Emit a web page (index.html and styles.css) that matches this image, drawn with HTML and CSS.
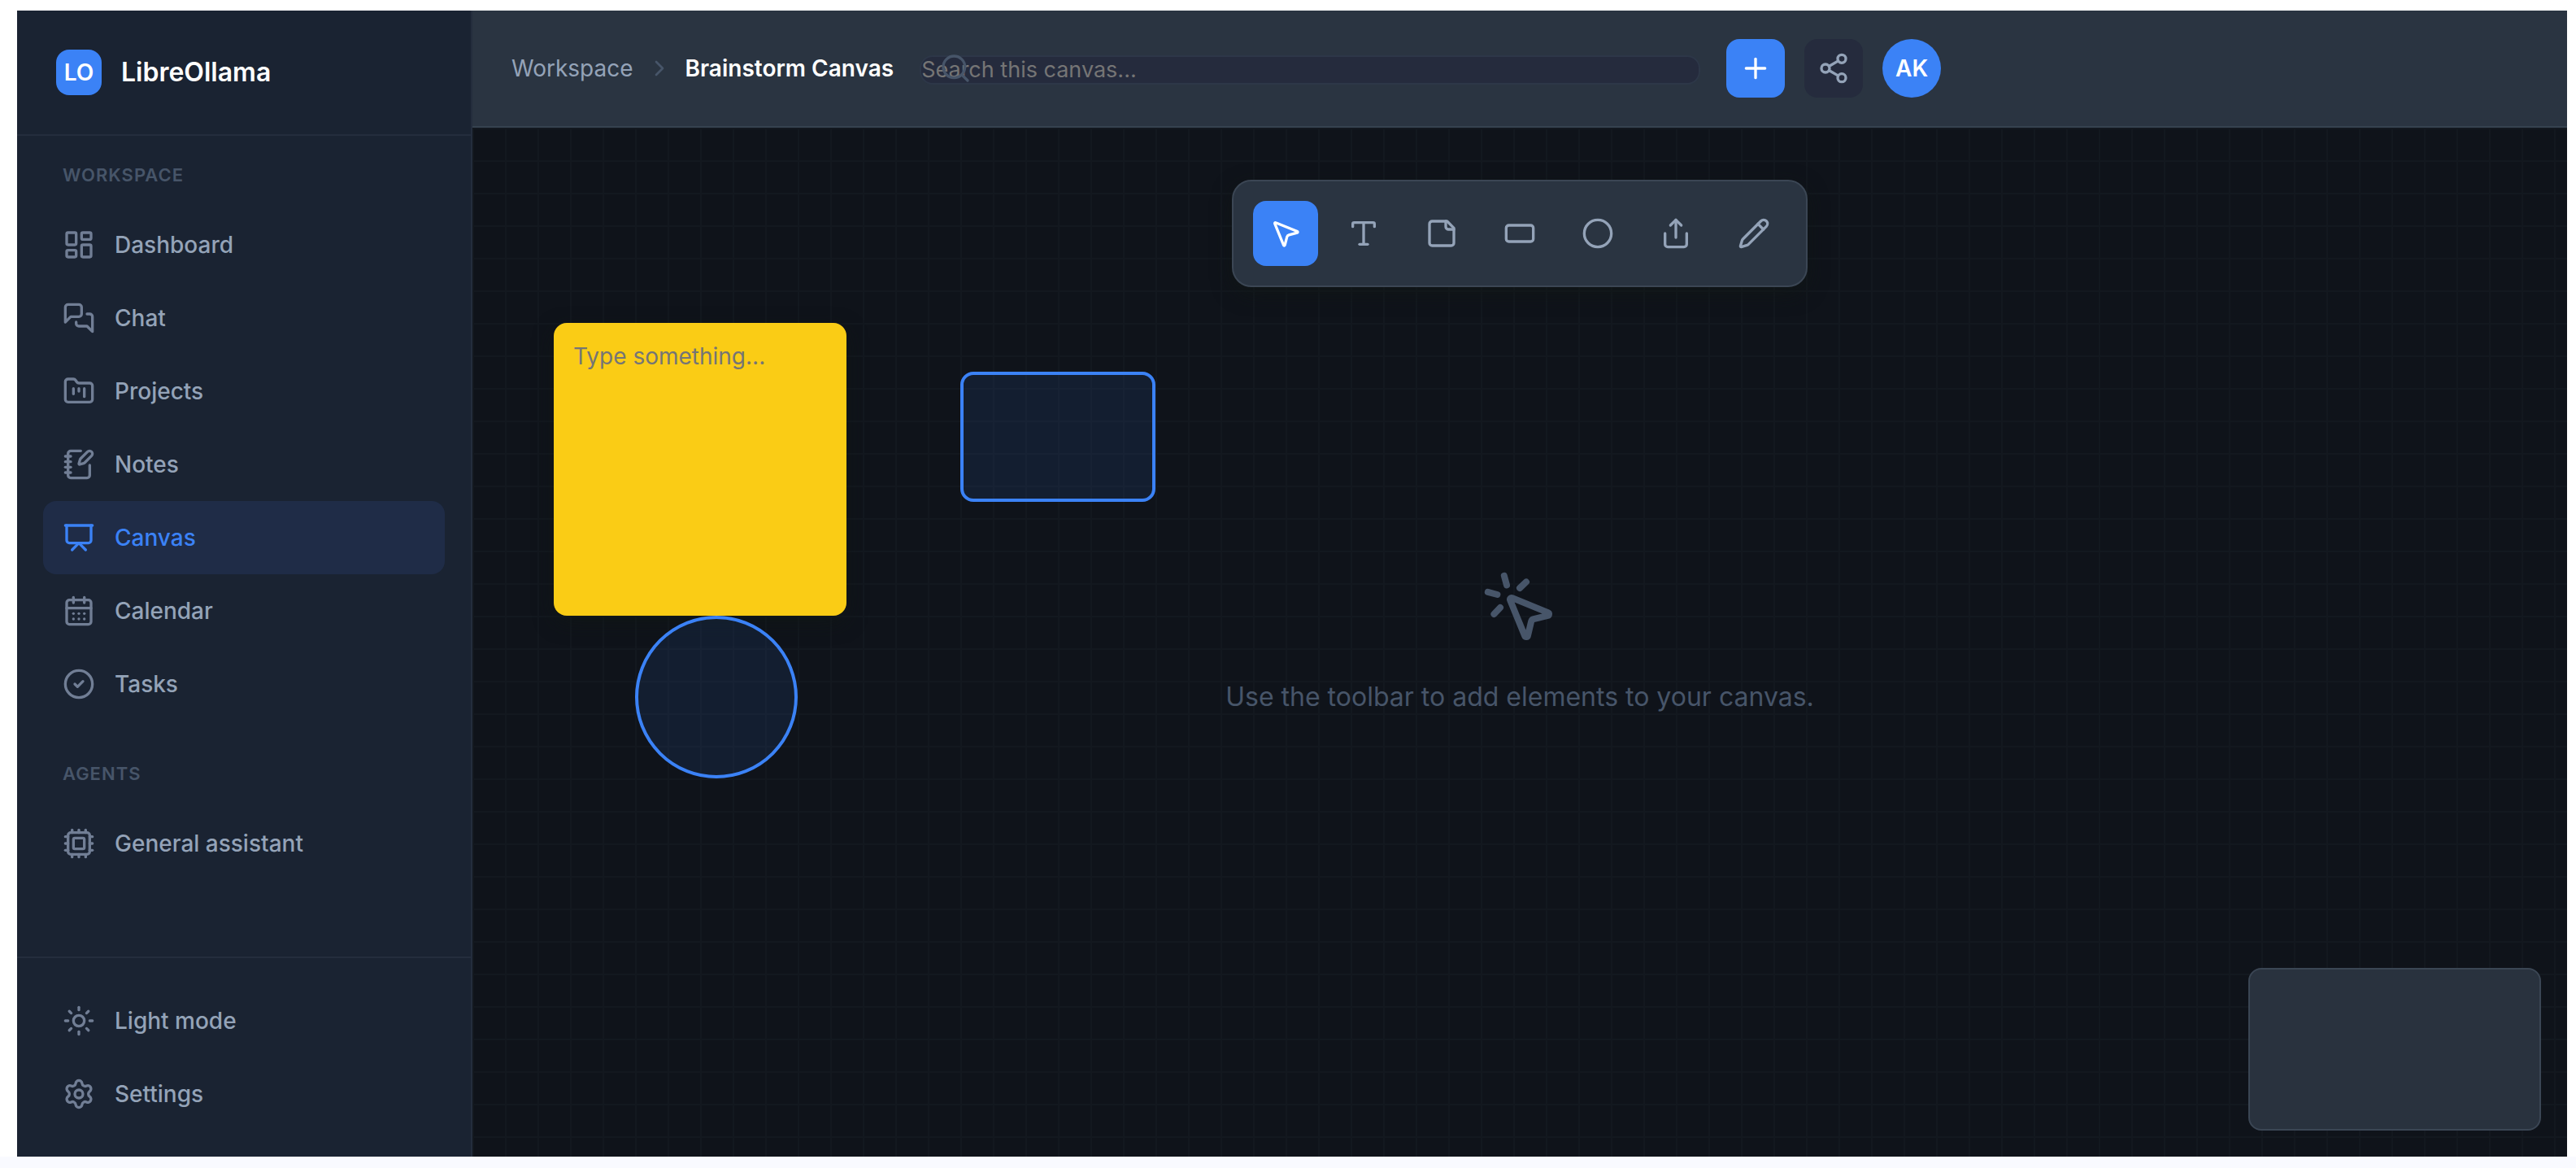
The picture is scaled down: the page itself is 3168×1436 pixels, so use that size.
FILE: index.html
```html
<!DOCTYPE html>
<html lang="en">
<head>
<meta charset="utf-8">
<title>Brainstorm Canvas - LibreOllama</title>
<link rel="stylesheet" href="styles.css">
</head>
<body>
<div class="app">
  <aside class="sidebar">
    <div class="brand">
      <span class="brand-logo">LO</span>
      <span class="brand-name">LibreOllama</span>
    </div>
    <nav class="nav">
      <section class="nav-section">
        <h2 class="nav-label">Workspace</h2>
        <a class="nav-item" href="#dashboard">
          <svg class="icon" viewBox="0 0 24 24"><rect x="3" y="3" width="7" height="9" rx="1"/><rect x="14" y="3" width="7" height="5" rx="1"/><rect x="14" y="12" width="7" height="9" rx="1"/><rect x="3" y="16" width="7" height="5" rx="1"/></svg>
          <span>Dashboard</span>
        </a>
        <a class="nav-item" href="#chat">
          <svg class="icon" viewBox="0 0 24 24"><path d="M14 9a2 2 0 0 1-2 2H6l-4 4V4a2 2 0 0 1 2-2h8a2 2 0 0 1 2 2z"/><path d="M18 9h2a2 2 0 0 1 2 2v11l-4-4h-6a2 2 0 0 1-2-2v-1"/></svg>
          <span>Chat</span>
        </a>
        <a class="nav-item" href="#projects">
          <svg class="icon" viewBox="0 0 24 24"><path d="M4 20h16a2 2 0 0 0 2-2V8a2 2 0 0 0-2-2h-7.93a2 2 0 0 1-1.66-.9l-.82-1.2A2 2 0 0 0 7.93 3H4a2 2 0 0 0-2 2v13c0 1.1.9 2 2 2Z"/><path d="M8 10v4"/><path d="M12 10v2"/><path d="M16 10v6"/></svg>
          <span>Projects</span>
        </a>
        <a class="nav-item" href="#notes">
          <svg class="icon" viewBox="0 0 24 24"><path d="M13.4 2H6a2 2 0 0 0-2 2v16a2 2 0 0 0 2 2h12a2 2 0 0 0 2-2v-7.4"/><path d="M2 6h4"/><path d="M2 10h4"/><path d="M2 14h4"/><path d="M2 18h4"/><path d="M21.378 5.626a1 1 0 1 0-3.004-3.004l-5.01 5.012a2 2 0 0 0-.506.854l-.837 2.87a.5.5 0 0 0 .62.62l2.87-.837a2 2 0 0 0 .854-.506z"/></svg>
          <span>Notes</span>
        </a>
        <a class="nav-item active" href="#canvas" aria-current="page">
          <svg class="icon" viewBox="0 0 24 24"><path d="M2 3h20"/><path d="M21 3v11a2 2 0 0 1-2 2H5a2 2 0 0 1-2-2V3"/><path d="m7 21 5-5 5 5"/></svg>
          <span>Canvas</span>
        </a>
        <a class="nav-item" href="#calendar">
          <svg class="icon" viewBox="0 0 24 24"><path d="M8 2v4"/><path d="M16 2v4"/><rect x="3" y="4" width="18" height="18" rx="2"/><path d="M3 10h18"/><path d="M8 14h.01"/><path d="M12 14h.01"/><path d="M16 14h.01"/><path d="M8 18h.01"/><path d="M12 18h.01"/><path d="M16 18h.01"/></svg>
          <span>Calendar</span>
        </a>
        <a class="nav-item" href="#tasks">
          <svg class="icon" viewBox="0 0 24 24"><circle cx="12" cy="12" r="10"/><path d="m9 12 2 2 4-4"/></svg>
          <span>Tasks</span>
        </a>
      </section>
      <section class="nav-section">
        <h2 class="nav-label">Agents</h2>
        <a class="nav-item" href="#general-assistant">
          <svg class="icon" viewBox="0 0 24 24"><path d="M12 20v2"/><path d="M12 2v2"/><path d="M17 20v2"/><path d="M17 2v2"/><path d="M2 12h2"/><path d="M2 17h2"/><path d="M2 7h2"/><path d="M20 12h2"/><path d="M20 17h2"/><path d="M20 7h2"/><path d="M7 20v2"/><path d="M7 2v2"/><rect x="4" y="4" width="16" height="16" rx="2"/><rect x="8" y="8" width="8" height="8" rx="1"/></svg>
          <span>General assistant</span>
        </a>
      </section>
    </nav>
    <div class="sidebar-footer">
      <button class="nav-item" type="button">
        <svg class="icon" viewBox="0 0 24 24"><circle cx="12" cy="12" r="4"/><path d="M12 2v2"/><path d="M12 20v2"/><path d="m4.93 4.93 1.41 1.41"/><path d="m17.66 17.66 1.41 1.41"/><path d="M2 12h2"/><path d="M20 12h2"/><path d="m6.34 17.66-1.41 1.41"/><path d="m19.07 4.93-1.41 1.41"/></svg>
        <span>Light mode</span>
      </button>
      <a class="nav-item" href="#settings">
        <svg class="icon" viewBox="0 0 24 24"><path d="M9.671 4.136a2.34 2.34 0 0 1 4.659 0 2.34 2.34 0 0 0 3.319 1.915 2.34 2.34 0 0 1 2.33 4.033 2.34 2.34 0 0 0 0 3.831 2.34 2.34 0 0 1-2.33 4.033 2.34 2.34 0 0 0-3.319 1.915 2.34 2.34 0 0 1-4.659 0 2.34 2.34 0 0 0-3.32-1.915 2.34 2.34 0 0 1-2.33-4.033 2.34 2.34 0 0 0 0-3.831A2.34 2.34 0 0 1 6.35 6.051a2.34 2.34 0 0 0 3.319-1.915"/><circle cx="12" cy="12" r="3"/></svg>
        <span>Settings</span>
      </a>
    </div>
  </aside>

  <main class="main">
    <header class="topbar">
      <nav class="breadcrumb" aria-label="Breadcrumb">
        <a class="crumb" href="#workspace">Workspace</a>
        <svg class="icon crumb-separator" viewBox="0 0 24 24"><path d="m9 18 6-6-6-6"/></svg>
        <span class="crumb-current">Brainstorm Canvas</span>
      </nav>
      <div class="search">
        <input class="search-input" type="search" placeholder="Search this canvas..." aria-label="Search this canvas">
        <svg class="icon search-icon" viewBox="0 0 24 24"><circle cx="11" cy="11" r="8"/><path d="m21 21-4.3-4.3"/></svg>
      </div>
      <div class="actions">
        <button class="action primary" type="button" aria-label="New">
          <svg class="icon" viewBox="0 0 24 24"><path d="M5 12h14"/><path d="M12 5v14"/></svg>
        </button>
        <button class="action" type="button" aria-label="Share">
          <svg class="icon" viewBox="0 0 24 24"><circle cx="18" cy="5" r="3"/><circle cx="6" cy="12" r="3"/><circle cx="18" cy="19" r="3"/><path d="m8.59 13.51 6.83 3.98"/><path d="m15.41 6.51-6.82 3.98"/></svg>
        </button>
        <button class="avatar" type="button">AK</button>
      </div>
    </header>

    <div class="canvas">
      <div class="empty">
        <svg class="icon empty-icon" viewBox="0 0 24 24"><path d="M14 4.1 12 6"/><path d="m5.1 8-2.9-.8"/><path d="m6 12-1.9 2"/><path d="M7.2 2.2 8 5.1"/><path d="M9.037 9.69a.498.498 0 0 1 .653-.653l11 4.5a.5.5 0 0 1-.074.949l-4.349 1.041a1 1 0 0 0-.74.739l-1.04 4.35a.5.5 0 0 1-.95.074z"/></svg>
        <p class="empty-text">Use the toolbar to add elements to your canvas.</p>
      </div>

      <textarea class="sticky" placeholder="Type something..." aria-label="Sticky note"></textarea>
      <div class="shape shape-rect"></div>
      <div class="shape shape-circle"></div>

      <div class="toolbar" role="toolbar" aria-label="Canvas tools">
        <button class="tool active" type="button" aria-label="Select">
          <svg class="icon" viewBox="0 0 24 24"><path d="M4.037 4.688a.495.495 0 0 1 .651-.651l16 6.5a.5.5 0 0 1-.063.947l-6.124 1.58a2 2 0 0 0-1.438 1.435l-1.579 6.126a.5.5 0 0 1-.947.063z"/></svg>
        </button>
        <button class="tool" type="button" aria-label="Text">
          <svg class="icon" viewBox="0 0 24 24"><path d="M12 4v16"/><path d="M4 7V5a1 1 0 0 1 1-1h14a1 1 0 0 1 1 1v2"/><path d="M9 20h6"/></svg>
        </button>
        <button class="tool" type="button" aria-label="Sticky note">
          <svg class="icon" viewBox="0 0 24 24"><path d="M16 3H5a2 2 0 0 0-2 2v14a2 2 0 0 0 2 2h14a2 2 0 0 0 2-2V8Z"/><path d="M15 3v4a2 2 0 0 0 2 2h4"/></svg>
        </button>
        <button class="tool" type="button" aria-label="Rectangle">
          <svg class="icon" viewBox="0 0 24 24"><rect x="2" y="6" width="20" height="12" rx="2"/></svg>
        </button>
        <button class="tool" type="button" aria-label="Circle">
          <svg class="icon" viewBox="0 0 24 24"><circle cx="12" cy="12" r="10"/></svg>
        </button>
        <button class="tool" type="button" aria-label="Export">
          <svg class="icon" viewBox="0 0 24 24"><path d="M12 2v13"/><path d="m16 6-4-4-4 4"/><path d="M4 12v8a2 2 0 0 0 2 2h12a2 2 0 0 0 2-2v-8"/></svg>
        </button>
        <button class="tool" type="button" aria-label="Draw">
          <svg class="icon" viewBox="0 0 24 24"><path d="M21.174 6.812a1 1 0 0 0-3.986-3.987L3.842 16.174a2 2 0 0 0-.5.83l-1.321 4.352a.5.5 0 0 0 .623.622l4.353-1.32a2 2 0 0 0 .83-.497z"/><path d="m15 5 4 4"/></svg>
        </button>
      </div>

      <div class="minimap"></div>
    </div>
  </main>
</div>
</body>
</html>
```
FILE: styles.css
```css
:root {
  --accent: #3b82f6;
  --sidebar: #1a2332;
  --surface: #2a3441;
  --field: #252b3d;
  --canvas: #0f131a;
  --line: #242d3d;
  --line-strong: #36424f;
  --text: #94a3b8;
  --text-muted: #475569;
}

* {
  box-sizing: border-box;
}

html {
  background: #f9faff;
}

body {
  margin: 0;
  padding: 13px 11px 0 21px;
  background: #fff;
  font-family: Inter, "Liberation Sans", sans-serif;
  font-size: 28px;
  line-height: 42px;
  color: var(--text);
}

button,
input,
textarea {
  margin: 0;
  border: 0;
  font-family: inherit;
}

a {
  color: inherit;
  text-decoration: none;
}

.icon {
  flex: none;
  width: 40px;
  height: 40px;
  fill: none;
  stroke: currentColor;
  stroke-width: 2;
  stroke-linecap: round;
  stroke-linejoin: round;
}

.app {
  display: flex;
  min-height: calc(100vh - 27px);
  background: var(--canvas);
}

/* Sidebar */

.sidebar {
  display: flex;
  flex-direction: column;
  flex: none;
  width: 560px;
  background: var(--sidebar);
  border-right: 2px solid var(--line);
}

.brand {
  display: flex;
  align-items: center;
  gap: 24px;
  padding: 48px;
  border-bottom: 2px solid var(--line);
}

.brand-logo {
  display: flex;
  align-items: center;
  justify-content: center;
  width: 56px;
  height: 56px;
  border-radius: 16px;
  background: var(--accent);
  color: #fff;
  font-weight: 600;
}

.brand-name {
  color: #fff;
  font-size: 32px;
  font-weight: 600;
}

.nav {
  flex: 1;
  padding: 31px 32px;
}

.nav-section + .nav-section {
  margin-top: 48px;
}

.nav-label {
  margin: 0 0 24px;
  padding: 0 24px;
  color: var(--text-muted);
  font-size: 22px;
  font-weight: 600;
  line-height: 34px;
  letter-spacing: 1px;
  text-transform: uppercase;
}

.nav-item {
  display: flex;
  align-items: center;
  gap: 24px;
  width: 100%;
  padding: 24px;
  border-radius: 16px;
  background: none;
  color: var(--text);
  font-size: 28px;
  font-weight: 500;
  line-height: 42px;
  text-align: left;
}

.nav-item .icon {
  color: #717e95;
}

.nav-item.active {
  background: #1f2c47;
  color: var(--accent);
}

.nav-item.active .icon {
  color: var(--accent);
}

.sidebar-footer {
  padding: 32px;
  border-top: 2px solid var(--line);
}

/* Top bar */

.main {
  display: flex;
  flex-direction: column;
  flex: 1;
  min-width: 0;
}

.topbar {
  display: flex;
  align-items: center;
  gap: 32px;
  padding: 35px 48px;
  background: var(--surface);
  border-bottom: 2px solid var(--line-strong);
}

.breadcrumb {
  display: flex;
  align-items: center;
  gap: 16px;
  white-space: nowrap;
}

.crumb-separator {
  width: 32px;
  height: 32px;
  color: var(--text-muted);
}

.crumb-current {
  color: #fff;
  font-weight: 600;
}

.search {
  position: relative;
  display: flex;
  align-items: center;
  flex: 0 1 960px;
  padding-top: 4px;
}

.search-input {
  width: 100%;
  height: 36px;
  padding: 0 0 2px;
  border: 2px solid #2d3748;
  border-radius: 16px;
  background: var(--field);
  color: #fff;
  font-size: 27px;
}

.search-input::placeholder,
.sticky::placeholder {
  color: #757575;
}

.search-icon {
  position: absolute;
  left: 24px;
  top: 0;
  color: var(--text-muted);
}

.actions {
  display: flex;
  gap: 24px;
}

.action,
.avatar {
  display: flex;
  align-items: center;
  justify-content: center;
  width: 72px;
  height: 72px;
  padding: 0;
  border-radius: 16px;
  background: var(--field);
  color: var(--text);
}

.action.primary {
  background: var(--accent);
  color: #fff;
}

.avatar {
  border-radius: 50%;
  background: var(--accent);
  color: #fff;
  font-size: 28px;
  font-weight: 600;
}

/* Canvas */

.canvas {
  position: relative;
  display: flex;
  align-items: center;
  justify-content: center;
  flex: 1;
  background-color: var(--canvas);
  background-image:
    linear-gradient(#13181f 2px, transparent 2px),
    linear-gradient(90deg, #13181f 2px, transparent 2px);
  background-size: 40px 40px;
}

.empty {
  display: flex;
  flex-direction: column;
  align-items: center;
  gap: 38px;
  color: var(--text-muted);
}

.empty-icon {
  width: 96px;
  height: 96px;
}

.empty-text {
  margin: 0;
  font-size: 32px;
  line-height: 48px;
}

.sticky {
  position: absolute;
  left: 100px;
  top: 240px;
  width: 360px;
  height: 360px;
  padding: 24px;
  border-radius: 16px;
  background: #facc15;
  box-shadow: 0 8px 24px rgba(17, 24, 20, .6);
  color: #111827;
  font-size: 28px;
  line-height: 34px;
  resize: none;
}

.shape {
  position: absolute;
  border: 4px solid var(--accent);
  background: rgba(59, 130, 246, .1);
}

.shape-rect {
  left: 600px;
  top: 300px;
  width: 240px;
  height: 160px;
  border-radius: 16px;
}

.shape-circle {
  left: 200px;
  top: 600px;
  width: 200px;
  height: 200px;
  border-radius: 50%;
}

.toolbar {
  position: absolute;
  top: 64px;
  left: 50%;
  transform: translateX(-50%);
  display: flex;
  gap: 16px;
  padding: 24px;
  border: 2px solid #3b4654;
  border-radius: 24px;
  background: var(--surface);
  box-shadow: 0 8px 24px rgba(17, 24, 20, .6);
}

.tool {
  display: flex;
  align-items: center;
  justify-content: center;
  width: 80px;
  height: 80px;
  padding: 0;
  border-radius: 16px;
  background: none;
  color: var(--text);
}

.tool.active {
  background: var(--accent);
  color: #fff;
}

.minimap {
  position: absolute;
  right: 32px;
  bottom: 32px;
  width: 360px;
  height: 200px;
  border: 2px solid #3b4654;
  border-radius: 16px;
  background: #29323e;
}
```
